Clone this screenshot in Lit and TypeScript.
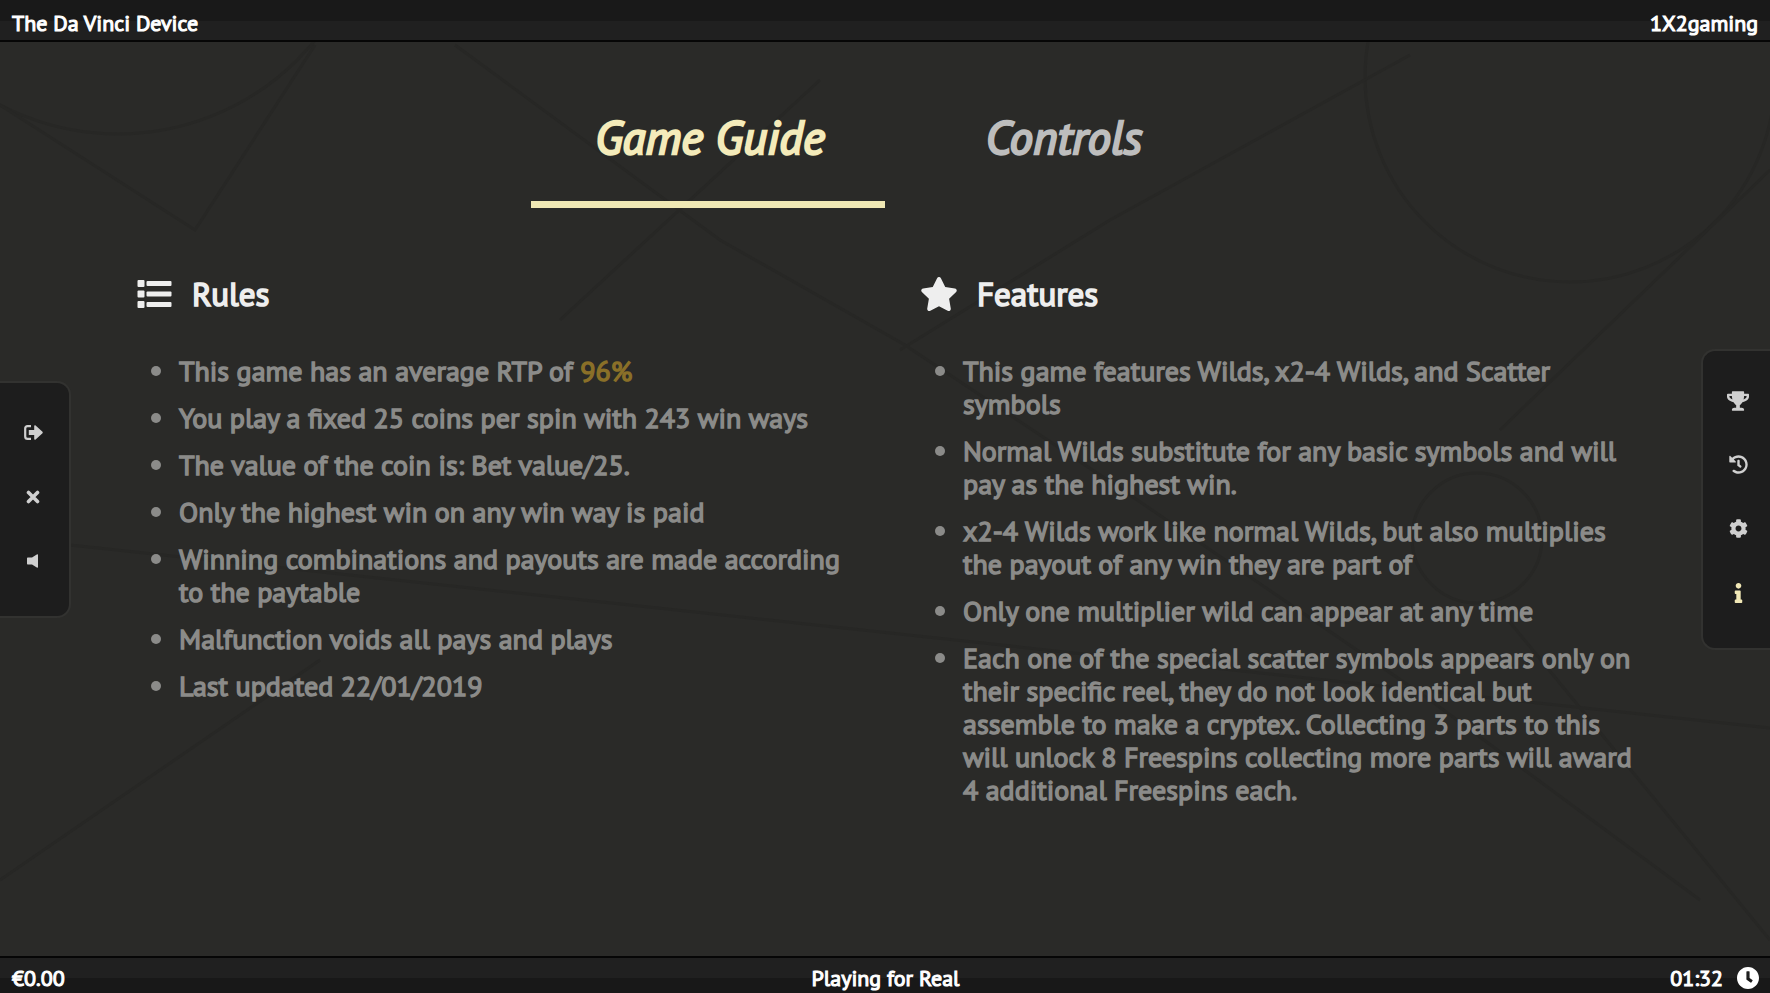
import { LitElement, html, css, svg } from "lit";
import { customElement, state, property } from "lit/decorators.js";
import { classMap } from "lit/directives/class-map.js";

type IconDef = { box: string; body: unknown };

const icons: Record<string, IconDef> = {
  exit: {
    box: "0 0 19 15",
    body: svg`<path d="M7 1.2H3.6C2 1.2 1.2 2 1.2 3.6v7.8c0 1.6.8 2.4 2.4 2.4H7" fill="none" stroke="currentColor" stroke-width="2.2"/><path d="M4.8 5h5.4V1.1c0-.8.8-1.1 1.4-.5l6.9 6.2c.4.4.4 1 0 1.4l-6.9 6.2c-.6.6-1.4.3-1.4-.5V10H4.8z"/>`,
  },
  close: {
    box: "0 0 14 14",
    body: svg`<path d="M2.5 2.5l9 9M11.5 2.5l-9 9" fill="none" stroke="currentColor" stroke-width="3.6" stroke-linecap="round"/>`,
  },
  sound: {
    box: "0 0 12 14",
    body: svg`<path d="M1 3.6h4L9.8.4c.6-.5 1.2-.2 1.2.5v12.2c0 .7-.6 1-1.2.5L5 10.4H1c-.6 0-1-.4-1-1V4.600c0-.6.4-1 1-1z"/>`,
  },
  trophy: {
    box: "0 0 576 512",
    body: svg`<path d="M552 64H448V24c0-13.300-10.700-24-24-24H152c-13.300 0-24 10.700-24 24v40H24C10.700 64 0 74.700 0 88v56c0 35.700 22.500 72.400 61.900 100.700 31.500 22.700 69.800 37.100 110 41.700C203.300 338.500 240 360 240 360v72h-48c-35.300 0-64 20.700-64 56v12c0 6.600 5.400 12 12 12h296c6.600 0 12-5.400 12-12v-12c0-35.300-28.700-56-64-56h-48v-72s36.700-21.500 68.100-73.600c40.300-4.600 78.600-19 110-41.700 39.300-28.300 61.900-65 61.900-100.700V88c0-13.300-10.700-24-24-24zM99.300 192.800C74.900 175.200 64 155.600 64 144v-16h64.200c1 32.600 5.800 61.200 12.800 86.200-15.100-5.200-29.200-12.400-41.700-21.400zM512 144c0 16.100-17.700 36.100-35.300 48.800-12.500 9-26.700 16.200-41.800 21.400 7-25 11.800-53.600 12.800-86.200H512v16z"/>`,
  },
  history: {
    box: "0 0 512 512",
    body: svg`<path d="M504 255.531c.253 136.640-111.180 248.372-247.820 248.468-59.015.042-113.223-20.530-155.822-54.911-11.077-8.940-11.905-25.541-1.839-35.607l11.267-11.267c8.609-8.609 22.353-9.551 31.891-1.984C173.062 425.135 212.781 440 256 440c101.705 0 184-82.311 184-184 0-101.705-82.311-184-184-184-48.814 0-93.149 18.969-126.068 49.932l50.754 50.754c10.080 10.080 2.941 27.314-11.313 27.314H24c-8.837 0-16-7.163-16-16V38.627c0-14.254 17.234-21.393 27.314-11.314l49.372 49.372C129.209 34.136 189.552 8 256 8c136.810 0 247.747 110.780 248 247.531zm-180.912 78.784l9.823-12.630c8.138-10.463 6.253-25.542-4.210-33.679L288 256.349V152c0-13.255-10.745-24-24-24h-16c-13.255 0-24 10.745-24 24v135.651l65.409 50.874c10.463 8.137 25.541 6.253 33.679-4.210z"/>`,
  },
  settings: {
    box: "0 0 512 512",
    body: svg`<path d="M487.400 315.700l-42.600-24.600c4.300-23.200 4.300-47 0-70.200l42.600-24.600c4.900-2.800 7.100-8.600 5.500-14-11.100-35.600-30-67.800-54.700-94.600-3.800-4.100-10-5.100-14.800-2.300L380.800 110c-17.900-15.400-38.500-27.300-60.800-35.100V25.800c0-5.600-3.900-10.500-9.400-11.700-36.700-8.200-74.300-7.800-109.200 0-5.500 1.200-9.400 6.100-9.400 11.700V75c-22.200 7.900-42.800 19.800-60.800 35.100L88.700 85.500c-4.900-2.800-11-1.900-14.800 2.300-24.700 26.700-43.600 58.900-54.700 94.600-1.700 5.400.6 11.200 5.500 14L67.300 221c-4.300 23.200-4.300 47 0 70.200l-42.600 24.600c-4.900 2.800-7.100 8.600-5.500 14 11.100 35.600 30 67.800 54.700 94.600 3.800 4.100 10 5.100 14.800 2.300l42.600-24.600c17.900 15.400 38.500 27.300 60.800 35.100v49.200c0 5.600 3.900 10.500 9.400 11.700 36.700 8.200 74.300 7.800 109.200 0 5.500-1.200 9.400-6.100 9.400-11.700v-49.200c22.200-7.900 42.800-19.800 60.800-35.100l42.600 24.600c4.900 2.800 11 1.900 14.800-2.300 24.700-26.700 43.600-58.900 54.700-94.600 1.500-5.500-.7-11.300-5.600-14.100zM256 336c-44.100 0-80-35.900-80-80s35.900-80 80-80 80 35.900 80 80-35.900 80-80 80z"/>`,
  },
  info: {
    box: "0 0 192 512",
    body: svg`<path d="M20 424.229h20V279.771H20c-11.046 0-20-8.954-20-20V212c0-11.046 8.954-20 20-20h112c11.046 0 20 8.954 20 20v212.229h20c11.046 0 20 8.954 20 20V492c0 11.046-8.954 20-20 20H20c-11.046 0-20-8.954-20-20v-47.771c0-11.046 8.954-20 20-20zM96 0C56.235 0 24 32.235 24 72s32.235 72 72 72 72-32.235 72-72S135.764 0 96 0z"/>`,
  },
  clock: {
    box: "8 8 496 496",
    body: svg`<path d="M256 8C119 8 8 119 8 256s111 248 248 248 248-111 248-248S393 8 256 8zm57.100 350.100L224.900 294c-3.100-2.300-4.900-5.900-4.900-9.700V116c0-6.600 5.400-12 12-12h48c6.600 0 12 5.400 12 12v137.700l63.500 46.200c5.400 3.900 6.500 11.400 2.600 16.800l-28.200 38.800c-3.900 5.300-11.400 6.500-16.800 2.600z"/>`,
  },
  list: {
    box: "0 0 34 28",
    body: svg`<rect width="7" height="7" rx="1"/><rect y="10.500" width="7" height="7" rx="1"/><rect y="21" width="7" height="7" rx="1"/><rect x="9" y="1" width="25" height="5" rx="1"/><rect x="9" y="11.500" width="25" height="5" rx="1"/><rect x="9" y="22" width="25" height="5" rx="1"/>`,
  },
  star: {
    box: "20 0 536 512",
    body: svg`<path d="M259.300 17.800L194 150.200 47.900 171.500c-26.200 3.800-36.700 36.100-17.700 54.600l105.700 103-25 145.500c-4.500 26.300 23.200 46 46.400 33.700L288 439.600l130.700 68.700c23.200 12.200 50.900-7.400 46.400-33.700l-25-145.500 105.700-103c19-18.500 8.500-50.800-17.700-54.600L382 150.200 316.700 17.800c-11.700-23.600-45.600-23.900-57.400 0z"/>`,
  },
};

@customElement("game-icon")
class GameIcon extends LitElement {
  @property() name = "";
  static styles = css`
    :host {
      display: block;
      flex: none;
    }
    .glyph {
      display: block;
      width: 100%;
      height: 100%;
      fill: currentColor;
    }
  `;
  render() {
    const icon = icons[this.name];
    return html`<svg class="glyph" viewBox=${icon.box} aria-hidden="true">${icon.body}</svg>`;
  }
}

const leftTools = [
  { id: "exit", label: "Exit" },
  { id: "close", label: "Close" },
  { id: "sound", label: "Sound" },
];
const rightTools = [
  { id: "trophy", label: "Paytable" },
  { id: "history", label: "History" },
  { id: "settings", label: "Settings" },
  { id: "info", label: "Information" },
];

const rules = [
  html`This game has an average RTP of <span class="rtp">96%</span>`,
  "You play a fixed 25 coins per spin with 243 win ways",
  "The value of the coin is: Bet value/25.",
  "Only the highest win on any win way is paid",
  "Winning combinations and payouts are made according to the paytable",
  "Malfunction voids all pays and plays",
  "Last updated 22/01/2019",
];
const features = [
  "This game features Wilds, x2-4 Wilds, and Scatter symbols",
  "Normal Wilds substitute for any basic symbols and will pay as the highest win.",
  "x2-4 Wilds work like normal Wilds, but also multiplies the payout of any win they are part of",
  "Only one multiplier wild can appear at any time",
  "Each one of the special scatter symbols appears only on their specific reel, they do not look identical but assemble to make a cryptex. Collecting 3 parts to this will unlock 8 Freespins collecting more parts will award 4 additional Freespins each.",
];

@customElement("app-root")
class AppRoot extends LitElement {
  @state() tab = "guide";

  static styles = css`
    :host {
      display: flex;
      flex-direction: column;
      position: relative;
      isolation: isolate;
      min-height: 100vh;
      overflow: hidden;
      background: #2a2a28;
      color: #fff;
      font-family: "PT Sans", Lato, "Open Sans", sans-serif;
      font-size: 22px;
      font-weight: 400;
    }
    *,
    *::before {
      box-sizing: border-box;
      -webkit-text-stroke: 0.05em currentColor;
    }
    .sketch {
      position: absolute;
      inset: 0;
      z-index: -1;
      width: 100%;
      height: 100%;
      fill: none;
      stroke: #272725;
      stroke-width: 3;
    }
    .bar {
      display: grid;
      grid-template-columns: 1fr auto 1fr;
      align-items: center;
      line-height: 26px;
    }
    .top {
      height: 42px;
      padding: 5px 12px 0;
      border-bottom: 2px solid #060606;
      background: linear-gradient(#191919 21px, #202020 21px);
    }
    .bottom {
      height: 37px;
      padding: 4px 11px 0 12px;
      border-top: 2px solid #060606;
      background: linear-gradient(#202020 20px, #181818 20px);
    }
    .end {
      display: flex;
      grid-column: 3;
      justify-content: flex-end;
      align-items: center;
      gap: 14px;
    }
    .clock {
      width: 22px;
      height: 22px;
    }
    .stage {
      display: flex;
      flex: 1;
      align-items: center;
    }
    .tools {
      display: flex;
      flex: none;
      flex-direction: column;
      padding: 18px 3px 23px;
      border: 2px solid #323230;
      background: #1d1d1d;
    }
    .tools.left {
      width: 71px;
      border-left: 0;
      border-radius: 0 14px 14px 0;
      padding-left: 0;
    }
    .tools.right {
      width: 69px;
      border-right: 0;
      border-radius: 14px 0 0 14px;
      padding-right: 0;
    }
    .tool {
      display: grid;
      place-items: center;
      height: 64px;
      padding: 0;
      border: 0;
      background: none;
      color: #cfcfcf;
      cursor: pointer;
    }
    .tool.active {
      color: #f1e8b6;
    }
    .exit { width: 19px; height: 15px; }
    .close { width: 14px; height: 14px; }
    .sound { width: 12px; height: 14px; }
    .trophy { width: 22px; height: 20px; }
    .history, .settings { width: 19px; height: 19px; }
    .info { width: 9px; height: 20px; }
    .main {
      flex: 1;
      align-self: stretch;
      min-width: 0;
      padding: 46px 68px 40px 66px;
    }
    .tabs {
      display: flex;
      justify-content: center;
    }
    .tab {
      width: 20vw;
      height: 120px;
      padding: 0 0 16px 4px;
      border: 0;
      border-bottom: 7px solid transparent;
      background: none;
      color: #bdbdbd;
      font: italic 400 47px/56px "PT Sans", Lato, "Open Sans", sans-serif;
      cursor: pointer;
    }
    .tab.active {
      border-color: #efe8b4;
      color: #f4ebba;
    }
    .columns {
      display: grid;
      grid-template-columns: 1fr 1fr;
      gap: 72px;
      padding-top: 64px;
    }
    .heading {
      display: flex;
      align-items: center;
      gap: 20px;
      height: 44px;
      margin: 0 0 38px;
      color: #eee;
      font-size: 33px;
      font-weight: 400;
      line-height: 44px;
    }
    .list { width: 35px; height: 28px; }
    .star { width: 36px; height: 34px; }
    .items {
      display: flex;
      flex-direction: column;
      gap: 14px;
      margin: 0;
      padding: 0 0 0 14px;
      list-style: none;
      color: #8b8b89;
      font-size: 28px;
      line-height: 33px;
    }
    .item {
      display: flex;
      gap: 18px;
    }
    .item::before {
      content: "";
      flex: none;
      width: 10px;
      height: 10px;
      margin-top: 12px;
      border-radius: 50%;
      background: currentColor;
    }
    .rtp {
      color: #8a7028;
    }
  `;

  renderTool(t: { id: string; label: string }) {
    return html`<button
      class=${classMap({ tool: true, active: t.id === "info" })}
      aria-label=${t.label}
    >
      <game-icon class=${t.id} name=${t.id}></game-icon>
    </button>`;
  }

  renderTab(id: string, label: string) {
    const on = this.tab === id;
    return html`<button
      role="tab"
      aria-selected=${on ? "true" : "false"}
      class=${classMap({ tab: true, active: on })}
      @click=${() => (this.tab = id)}
    >
      ${label}
    </button>`;
  }

  renderSection(icon: string, title: string, items: unknown[]) {
    return html`<section>
      <h2 class="heading"><game-icon class=${icon} name=${icon}></game-icon>${title}</h2>
      <ul class="items">
        ${items.map((i) => html`<li class="item"><span>${i}</span></li>`)}
      </ul>
    </section>`;
  }

  render() {
    return html`
      <svg class="sketch" viewBox="0 0 1770 993" preserveAspectRatio="xMidYMid slice" aria-hidden="true">
        <circle cx="118" cy="-120" r="254" />
        <circle cx="1570" cy="77" r="205" />
        <circle cx="1477" cy="538" r="65" />
        <path d="M0 105L195 230 315 45M455 45L720 240 905 345 1130 495 1430 700 1700 900M820 80L560 320M1410 55L1110 220 900 350" />
        <path d="M1770 170L1500 430M70 545L630 605 1770 728M0 880L320 660M1500 610L1770 940" />
      </svg>
      <header class="bar top">
        <span>The Da Vinci Device</span>
        <span class="end">1X2gaming</span>
      </header>
      <div class="stage">
        <nav class="tools left" aria-label="Game">${leftTools.map((t) => this.renderTool(t))}</nav>
        <main class="main">
          <div class="tabs" role="tablist">
            ${this.renderTab("guide", "Game Guide")}${this.renderTab("controls", "Controls")}
          </div>
          <div class="columns">
            ${this.renderSection("list", "Rules", rules)}
            ${this.renderSection("star", "Features", features)}
          </div>
        </main>
        <nav class="tools right" aria-label="Menu">${rightTools.map((t) => this.renderTool(t))}</nav>
      </div>
      <footer class="bar bottom">
        <span>€0.00</span>
        <span>Playing for Real</span>
        <span class="end">01:32<game-icon class="clock" name="clock"></game-icon></span>
      </footer>
    `;
  }
}
